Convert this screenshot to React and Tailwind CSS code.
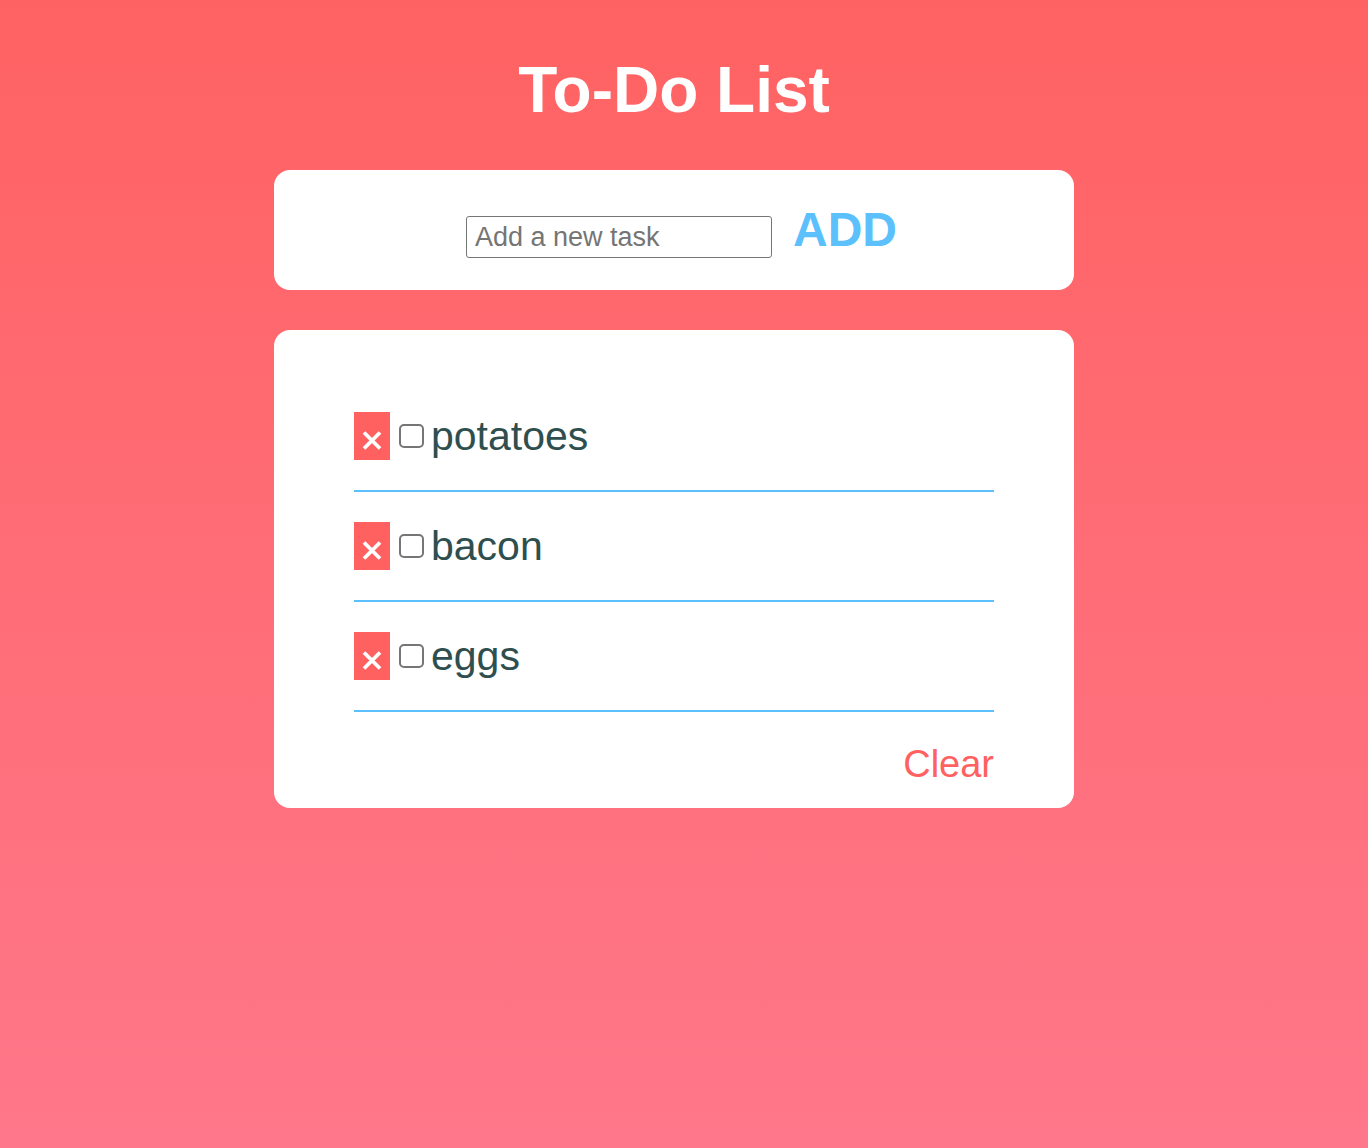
import { useState } from "react";

const initialTasks = ["potatoes", "bacon", "eggs"];

const TaskItem = ({ task, onRemove }) => {
  return (
    <li className="flex items-center py-[30px] border-b-2 border-[#5bc0fb]">
      {/* delete button */}
      <button
        onClick={onRemove}
        className="w-[36px] h-[48px] bg-[#ff6161] flex items-end justify-center pb-[10px] shrink-0"
      >
        <svg width="20" height="19" viewBox="0 0 20 19">
          <path d="M2 1.5 L18 17.5 M18 1.5 L2 17.5" stroke="white" strokeWidth="3.8" />
        </svg>
      </button>
      <input
        type="checkbox"
        className="appearance-none w-[25px] h-[24px] ml-[9px] mr-[7px] border-2 border-[#767676] rounded-[5px] bg-white shrink-0"
      />
      <span className="text-[41px] leading-[48px] text-[#2f4f4f]">{task}</span>
    </li>
  );
};

export default function App() {
  const [tasks, setTasks] = useState(initialTasks);
  const [text, setText] = useState("");

  const addTask = () => {
    if (!text.trim()) return;
    setTasks([...tasks, text.trim()]);
    setText("");
  };

  return (
    <div
      className="min-h-screen bg-gradient-to-b from-[#ff6262] to-[#ff778a] flex flex-col items-center pr-[20px]"
      style={{ fontFamily: '"Liberation Sans", Arial, sans-serif' }}
    >
      <h1 className="mt-[58px] text-[64px] leading-[64px] font-bold text-white">To-Do List</h1>

      {/* Add form */}
      <div className="mt-[48px] w-[800px] h-[120px] bg-white rounded-2xl flex items-center justify-center pl-[15px] pt-[14px]">
        <input
          value={text}
          onChange={(e) => setText(e.target.value)}
          placeholder="Add a new task"
          className="w-[306px] h-[42px] px-[8px] border border-[#767676] rounded-[3px] text-[27px] text-[#2f4f4f] placeholder:text-[#757575] outline-none"
        />
        <button
          onClick={addTask}
          className="ml-[21px] text-[48px] leading-[48px] font-bold text-[#5bc0fb] -mt-[14px]"
        >
          ADD
        </button>
      </div>

      {/* Task list */}
      <div className="mt-[40px] w-[800px] bg-white rounded-2xl px-[80px] pt-[52px] pb-[22px] flex flex-col">
        <ul>
          {tasks.map((task, i) => (
            <TaskItem
              key={task + i}
              task={task}
              onRemove={() => setTasks(tasks.filter((_, j) => j !== i))}
            />
          ))}
        </ul>
        <button
          onClick={() => setTasks([])}
          className="self-end mt-[30px] text-[38px] leading-[44px] text-[#ff6161]"
        >
          Clear
        </button>
      </div>
    </div>
  );
}
